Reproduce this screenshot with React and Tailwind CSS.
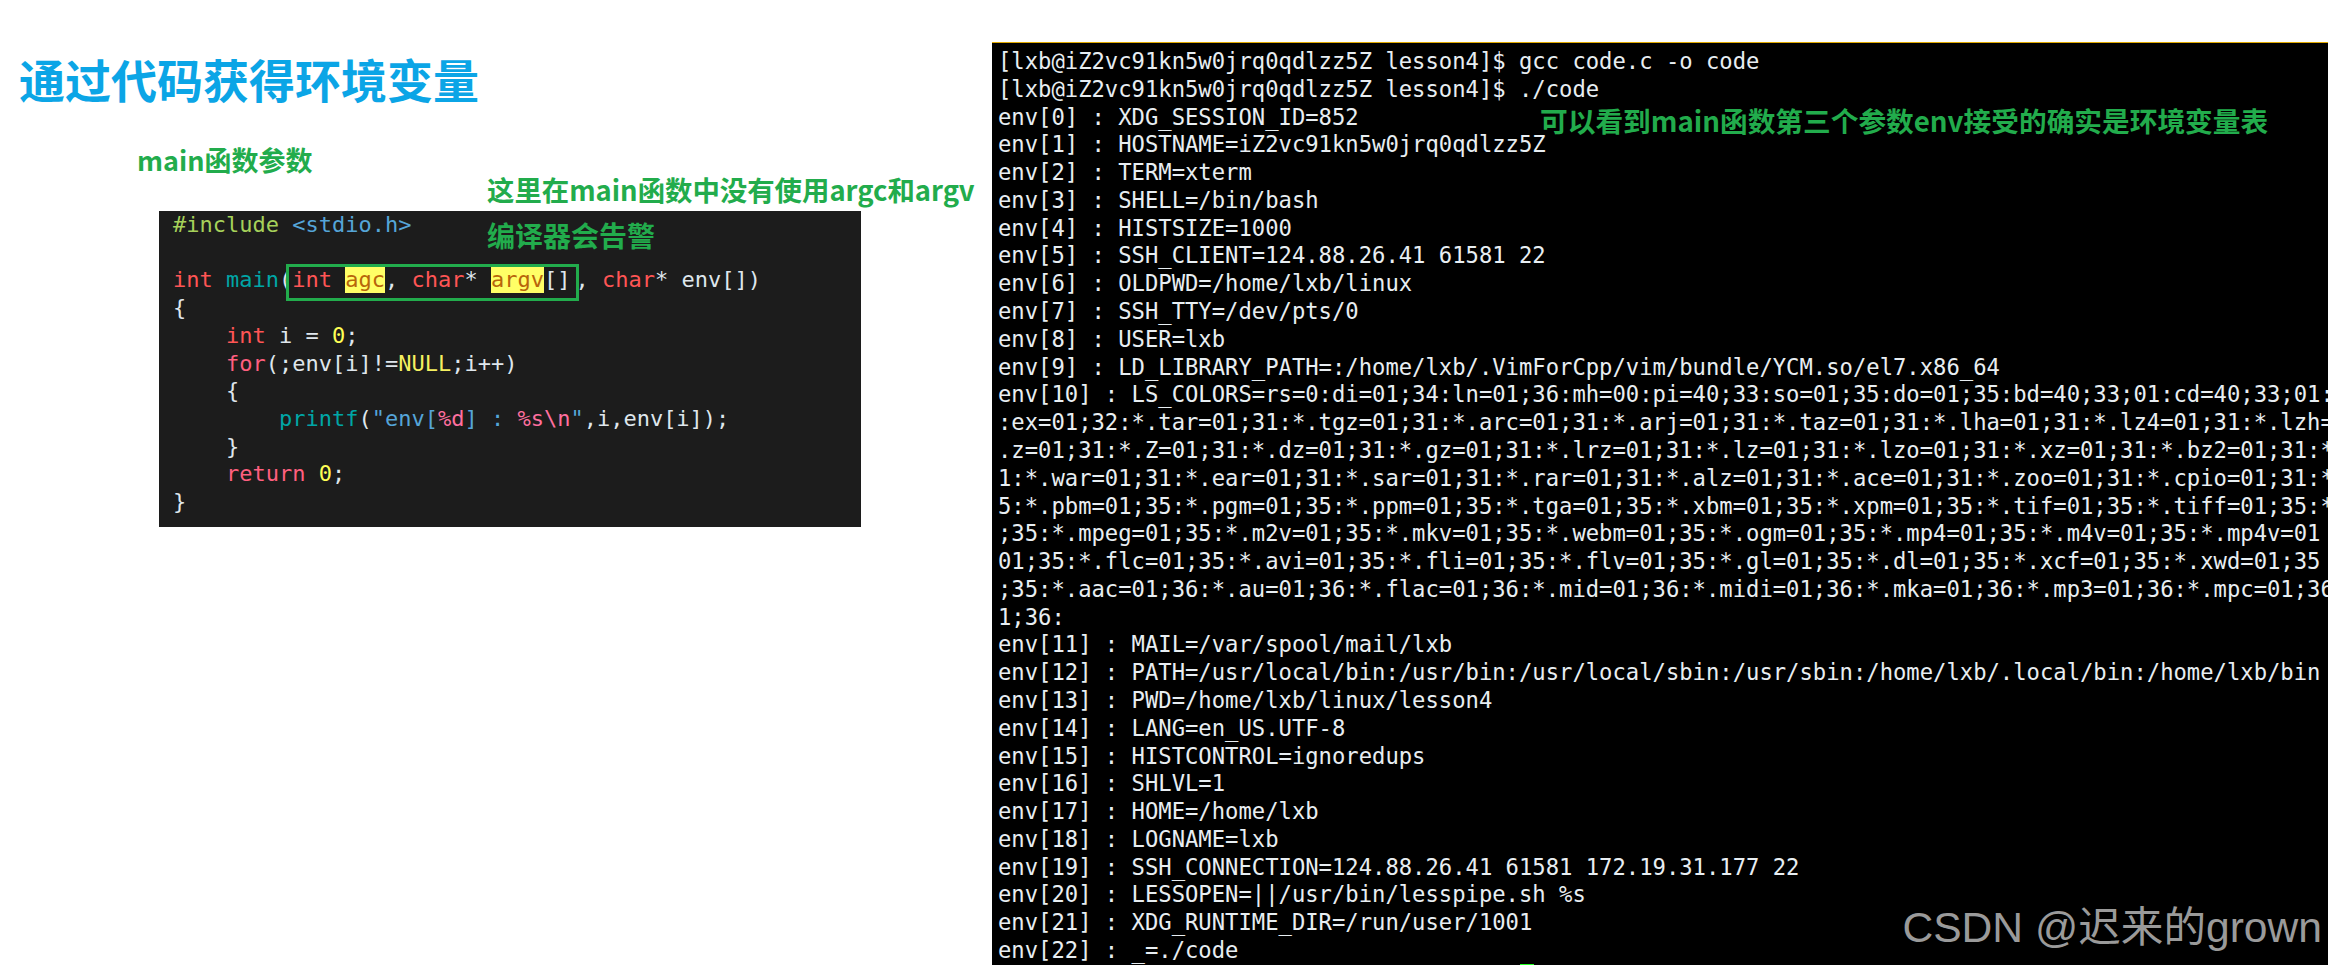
import React from "react";

const cjk = { fontFamily: '"Noto Sans CJK SC", "Noto Sans", sans-serif' };

const termLines = [
  "[lxb@iZ2vc91kn5w0jrq0qdlzz5Z lesson4]$ gcc code.c -o code",
  "[lxb@iZ2vc91kn5w0jrq0qdlzz5Z lesson4]$ ./code",
  "env[0] : XDG_SESSION_ID=852",
  "env[1] : HOSTNAME=iZ2vc91kn5w0jrq0qdlzz5Z",
  "env[2] : TERM=xterm",
  "env[3] : SHELL=/bin/bash",
  "env[4] : HISTSIZE=1000",
  "env[5] : SSH_CLIENT=124.88.26.41 61581 22",
  "env[6] : OLDPWD=/home/lxb/linux",
  "env[7] : SSH_TTY=/dev/pts/0",
  "env[8] : USER=lxb",
  "env[9] : LD_LIBRARY_PATH=:/home/lxb/.VimForCpp/vim/bundle/YCM.so/el7.x86_64",
  "env[10] : LS_COLORS=rs=0:di=01;34:ln=01;36:mh=00:pi=40;33:so=01;35:do=01;35:bd=40;33;01:cd=40;33;01:",
  ":ex=01;32:*.tar=01;31:*.tgz=01;31:*.arc=01;31:*.arj=01;31:*.taz=01;31:*.lha=01;31:*.lz4=01;31:*.lzh=",
  ".z=01;31:*.Z=01;31:*.dz=01;31:*.gz=01;31:*.lrz=01;31:*.lz=01;31:*.lzo=01;31:*.xz=01;31:*.bz2=01;31:*",
  "1:*.war=01;31:*.ear=01;31:*.sar=01;31:*.rar=01;31:*.alz=01;31:*.ace=01;31:*.zoo=01;31:*.cpio=01;31:*",
  "5:*.pbm=01;35:*.pgm=01;35:*.ppm=01;35:*.tga=01;35:*.xbm=01;35:*.xpm=01;35:*.tif=01;35:*.tiff=01;35:*",
  ";35:*.mpeg=01;35:*.m2v=01;35:*.mkv=01;35:*.webm=01;35:*.ogm=01;35:*.mp4=01;35:*.m4v=01;35:*.mp4v=01",
  "01;35:*.flc=01;35:*.avi=01;35:*.fli=01;35:*.flv=01;35:*.gl=01;35:*.dl=01;35:*.xcf=01;35:*.xwd=01;35",
  ";35:*.aac=01;36:*.au=01;36:*.flac=01;36:*.mid=01;36:*.midi=01;36:*.mka=01;36:*.mp3=01;36:*.mpc=01;36",
  "1;36:",
  "env[11] : MAIL=/var/spool/mail/lxb",
  "env[12] : PATH=/usr/local/bin:/usr/bin:/usr/local/sbin:/usr/sbin:/home/lxb/.local/bin:/home/lxb/bin",
  "env[13] : PWD=/home/lxb/linux/lesson4",
  "env[14] : LANG=en_US.UTF-8",
  "env[15] : HISTCONTROL=ignoredups",
  "env[16] : SHLVL=1",
  "env[17] : HOME=/home/lxb",
  "env[18] : LOGNAME=lxb",
  "env[19] : SSH_CONNECTION=124.88.26.41 61581 172.19.31.177 22",
  "env[20] : LESSOPEN=||/usr/bin/lesspipe.sh %s",
  "env[21] : XDG_RUNTIME_DIR=/run/user/1001",
  "env[22] : _=./code",
];

const Red = ({ children }) => <span className="text-[#ff5555]">{children}</span>;
const Hi = ({ children }) => (
  <span className="inline-block h-[27px] bg-[#ffff66] align-top leading-[27px] text-[#b8650a]">{children}</span>
);

const CodeBlock = () => (
  <div className="relative ml-[159px] mt-[2px] h-[316px] w-[702px] bg-[#1c1c1c] pl-[14px] font-['DejaVu_Sans_Mono',monospace] text-[22px] leading-[27.7px] font-normal whitespace-pre text-[#dfe6ec]">
    <div>
      <span className="text-[#a6d15a]">#include</span> <span className="text-[#55a5d8]">&lt;stdio.h&gt;</span>
    </div>
    <div>&nbsp;</div>
    <div>
      <Red>int</Red> <span className="text-[#00a6a6]">main</span>(<Red>int</Red> <Hi>agc</Hi>, <Red>char</Red>* <Hi>argv</Hi>[]<span className="ml-[5px]">, </span><Red>char</Red>* env[])
    </div>
    <div>{"{"}</div>
    <div>
      {"    "}<Red>int</Red> i = <span className="text-[#ffff55]">0</span>;
    </div>
    <div>
      {"    "}<span className="text-[#ff5f7f]">for</span>(;env[i]!=<span className="text-[#f5f060]">NULL</span>;i++)
    </div>
    <div>{"    {"}</div>
    <div>
      {"        "}<span className="text-[#00a6a6]">printf</span>(<span className="text-[#55a5d8]">"env[</span><span className="text-[#ff6f9f]">%d</span><span className="text-[#55a5d8]">] : </span><span className="text-[#ff6f9f]">%s\n</span><span className="text-[#55a5d8]">"</span>,i,env[i]);
    </div>
    <div>{"    }"}</div>
    <div>
      {"    "}<span className="text-[#ff5f7f]">return</span> <span className="text-[#ffff55]">0</span>;
    </div>
    <div>{"}"}</div>

    {/* annotation box and note sit on top of the code */}
    <div className="absolute left-[127px] top-[53px] h-[37px] w-[293px] border-[3px] border-[#22ac4c]" />
    <div style={cjk} className="absolute left-[328px] top-[4px] text-[28px] leading-[40px] font-bold text-[#22ac4c]">
      编译器会告警
    </div>
  </div>
);

export default function App() {
  return (
    <div className="flex h-[965px] w-[2328px] overflow-hidden bg-white">
      <div style={cjk} className="w-[992px] shrink-0 font-bold">
        <h1 className="ml-[19px] mt-[46px] text-[46px] leading-[64px] text-[#0ba5e6]">通过代码获得环境变量</h1>
        <div className="ml-[137px] mt-[30px] text-[27px] leading-[40px] text-[#22ac4c]">main函数参数</div>
        <div className="ml-[487px] -mt-[11px] text-[27.4px] leading-[40px] whitespace-nowrap text-[#22ac4c]">
          这里在main函数中没有使用argc和argv
        </div>
        <CodeBlock />
      </div>

      <div className="relative mt-[42px] h-[923px] min-w-0 flex-1 overflow-hidden border-t border-[#e0a800] bg-black pl-[6px] pt-[5px] font-['DejaVu_Sans_Mono',monospace] text-[22.2px] leading-[27.78px] whitespace-pre text-[#e8eef2]">
        {termLines.map((line, i) => (
          <div key={i}>{line}</div>
        ))}
        <div style={cjk} className="absolute left-[548px] top-[57px] text-[27.7px] leading-[40px] font-bold whitespace-nowrap text-[#22ac4c]">
          可以看到main函数第三个参数env接受的确实是环境变量表
        </div>
        <div className="absolute bottom-0 left-[528px] h-px w-[14px] bg-[#22ff22]" />
        <div className="absolute right-[6px] top-[856px] font-['Liberation_Sans','Noto_Sans_CJK_SC',sans-serif] text-[42.6px] leading-[56px] text-[#9a9a9a]">
          CSDN @迟来的grown
        </div>
      </div>
    </div>
  );
}
